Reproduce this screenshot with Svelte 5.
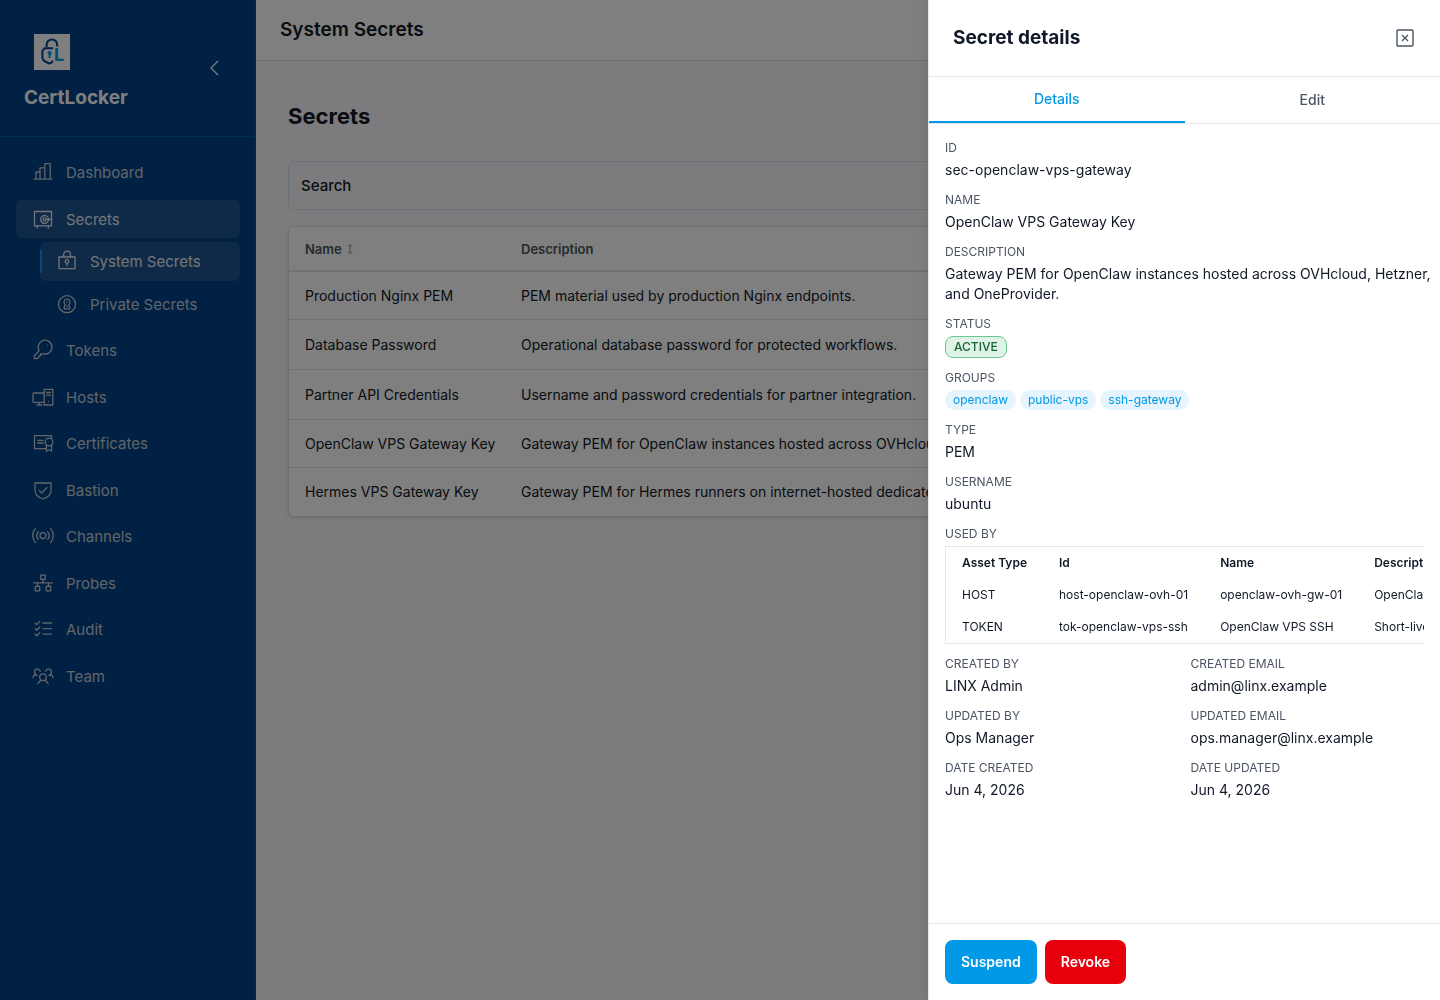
<script>
  const nav = [
    { label: 'Dashboard', icon: 'chart' },
    {
      label: 'Secrets',
      icon: 'safe',
      active: true,
      children: [
        { label: 'System Secrets', icon: 'lock', active: true },
        { label: 'Private Secrets', icon: 'keyhole' }
      ]
    },
    { label: 'Tokens', icon: 'key' },
    { label: 'Hosts', icon: 'hosts' },
    { label: 'Certificates', icon: 'certificate' },
    { label: 'Bastion', icon: 'shield' },
    { label: 'Channels', icon: 'broadcast' },
    { label: 'Probes', icon: 'network' },
    { label: 'Audit', icon: 'checklist' },
    { label: 'Team', icon: 'team' }
  ];

  const icons = {
    chart: 'M2 18.2H20M4 18V11H8M8 18V6.8H12.8M12.8 18V2.6H18.2V18',
    safe: 'M2.5 3.5H19.5V17.8H2.5ZM5.3 18V20M16.3 18V20M16.4 10.4A3.9 3.9 0 1 0 16.4 12.4M14.2 11.4A1.5 1.5 0 1 0 11.2 11.4A1.5 1.5 0 1 0 14.2 11.4M14 11.4H19.5',
    lock: 'M3 7H19V18.6H3ZM7.6 7V4.6A3.4 3.4 0 0 1 14.4 4.6V7M12.8 11.4A1.8 1.8 0 1 0 9.2 11.4A1.8 1.8 0 1 0 12.8 11.4M11 13.2V15.6',
    keyhole: 'M19.5 11.2A8.5 8.5 0 1 0 2.5 11.2A8.5 8.5 0 1 0 19.5 11.2M9.3 11.6A3 3 0 1 1 12.7 11.6L13.8 14.2V15.8H8.2V14.2ZM11 9.2V9.3M11 13V13.8',
    key: 'M7.2 11.6A6.9 6.9 0 1 1 11.2 14.7L9.6 15.2L8.6 15V16.6L6.8 17V18.4L5 19.6H2.4V16.8ZM15.6 6.3V6.4',
    hosts: 'M12 7H2Q1 7 1 8V15.4Q1 16.4 2 16.4H12M7.3 16.4V19M5 19H10M12.2 3.4H20.8V19H12.2ZM14.6 6.5H18.4M14.6 9.2H18.4M16.5 15.4V15.6',
    certificate: 'M19.5 6V3.6H2.5V16.6H13.6M5.8 8.4H11.2M5.8 11H11.2M20.8 10A3.8 3.8 0 1 0 13.2 10A3.8 3.8 0 1 0 20.8 10M14.4 13V19.2L17 17.8L19.6 19.2V13',
    shield: 'M3 4H19V11.5C19 15.6 15.4 18.6 11 20C6.6 18.6 3 15.6 3 11.5ZM7.2 11.4L9.8 14L14.8 8.8',
    broadcast: 'M14 10.6A3 3 0 1 0 8 10.6A3 3 0 1 0 14 10.6M6.3 6.8A6 6 0 0 0 6.3 14.4M15.7 6.8A6 6 0 0 1 15.7 14.4M3.4 3.6A10.5 10.5 0 0 0 3.4 17.6M18.6 3.6A10.5 10.5 0 0 1 18.6 17.6',
    network: 'M8.8 3.2H13.2V7.4H8.8ZM11 7.4V10.8M1.6 10.8H20.4M5.5 10.8V14.4M16.5 10.8V14.4M3.3 14.4H7.7V18.8H3.3ZM14.3 14.4H18.7V18.8H14.3Z',
    checklist: 'M11 5H19.4M11 10.6H19.4M11 16.2H19.4M3.2 5L4.8 6.6L7.8 3.4M3.2 10.6L4.8 12.2L7.8 9M3.2 16.2L4.8 17.8L7.8 14.6',
    team: 'M14.4 12.2A3.4 3.4 0 1 0 7.6 12.2A3.4 3.4 0 1 0 14.4 12.2M5.8 18.8Q7.4 16 9.2 15.2M16.2 18.8Q14.6 16 12.8 15.2M8.2 6.4A2.9 2.9 0 1 0 3.6 9.2M3.8 9Q1.4 9.8 1 12.6M3.2 10.4H5M13.8 6.4A2.9 2.9 0 1 1 18.4 9.2M18.2 9Q20.6 9.8 21 12.6M18.8 10.4H17'
  };

  const secrets = [
    { name: 'Production Nginx PEM', description: 'PEM material used by production Nginx endpoints.' },
    { name: 'Database Password', description: 'Operational database password for protected workflows.', tall: true },
    { name: 'Partner API Credentials', description: 'Username and password credentials for partner integration.', tall: true },
    { name: 'OpenClaw VPS Gateway Key', description: 'Gateway PEM for OpenClaw instances hosted across OVHcloud, Hetzner, and OneProvider.' },
    { name: 'Hermes VPS Gateway Key', description: 'Gateway PEM for Hermes runners on internet-hosted dedicated servers.' }
  ];

  const groups = ['openclaw', 'public-vps', 'ssh-gateway'];

  const usedBy = [
    ['HOST', 'host-openclaw-ovh-01', 'openclaw-ovh-gw-01', 'OpenClaw gateway'],
    ['TOKEN', 'tok-openclaw-vps-ssh', 'OpenClaw VPS SSH', 'Short-lived access']
  ];

  const audit = [
    ['Created by', 'LINX Admin'],
    ['Created email', 'admin@linx.example'],
    ['Updated by', 'Ops Manager'],
    ['Updated email', 'ops.manager@linx.example'],
    ['Date created', 'Jun 4, 2026'],
    ['Date updated', 'Jun 4, 2026']
  ];
</script>

{#snippet icon(name)}
  <svg class="icon" viewBox="0 0 22 22" aria-hidden="true"><path d={icons[name]} /></svg>
{/snippet}

<div class="app">
  <aside class="sidebar">
    <div class="brand">
      <div>
        <div class="logo">
          <svg viewBox="0 0 36 36" aria-hidden="true">
            <rect width="36" height="36" fill="#fff" />
            <g fill="none" stroke="#00428a" stroke-width="2">
              <path d="M12.6 13V10.8A5.3 5.3 0 0 1 23.2 10.8V12.6" />
              <path d="M19 14.2H10.6L8.4 16.6V23.6Q8.4 26 10.4 27L15 29.4Q18 29.4 18.6 26.6" />
            </g>
            <circle cx="15.6" cy="19" r="2.1" fill="#0099e8" />
            <path d="M15.6 20V24" stroke="#0099e8" stroke-width="2" />
            <text x="20" y="27" class="logo-letter">L</text>
          </svg>
        </div>
        <div class="brand-name">CertLocker</div>
      </div>
      <button class="collapse" aria-label="Collapse sidebar">
        <svg viewBox="0 0 16 16" aria-hidden="true"><path d="M12 1L5 8L12 15" /></svg>
      </button>
    </div>
    <nav>
      {#each nav as item}
        <div class="nav-group">
          <a href="#{item.icon}" class="nav-item" class:active={item.active}>{@render icon(item.icon)}<span>{item.label}</span></a>
          {#if item.children}
            {#each item.children as child}
              <a href="#{child.icon}" class="nav-item sub" class:active={child.active}>{@render icon(child.icon)}<span>{child.label}</span></a>
            {/each}
          {/if}
        </div>
      {/each}
    </nav>
  </aside>

  <div class="page">
    <header class="topbar">System Secrets</header>
    <main>
      <h1>Secrets</h1>
      <button class="search">Search</button>
      <div class="table-card">
        <table>
          <thead>
            <tr>
              <th class="name-col">
                <span class="sort">Name
                  <svg viewBox="0 0 8 12" aria-hidden="true"><path d="M4 1.5V10.5M2 3.5L4 1.5L6 3.5M2 8.5L4 10.5L6 8.5" /></svg>
                </span>
              </th>
              <th>Description</th>
            </tr>
          </thead>
          <tbody>
            {#each secrets as secret}
              <tr class:tall={secret.tall}><td>{secret.name}</td><td>{secret.description}</td></tr>
            {/each}
          </tbody>
        </table>
      </div>
    </main>
  </div>
</div>

<div class="overlay"></div>

<div class="drawer" role="dialog" aria-labelledby="drawer-title">
  <div class="drawer-head">
    <h2 id="drawer-title">Secret details</h2>
    <button class="close" aria-label="Close">
      <svg viewBox="0 0 22 22" aria-hidden="true">
        <rect x="3" y="3" width="16" height="16" rx="1" />
        <path d="M8 8L14 14M14 8L8 14" />
      </svg>
    </button>
  </div>
  <div class="tabs" role="tablist">
    <button role="tab" aria-selected="true" class="tab selected">Details</button>
    <button role="tab" aria-selected="false" class="tab">Edit</button>
  </div>
  <div class="drawer-body">
    <div class="field"><span class="label">ID</span><span>sec-openclaw-vps-gateway</span></div>
    <div class="field"><span class="label">Name</span><span>OpenClaw VPS Gateway Key</span></div>
    <div class="field wide">
      <span class="label">Description</span>
      <span>Gateway PEM for OpenClaw instances hosted across OVHcloud, Hetzner, and OneProvider.</span>
    </div>
    <div class="field"><span class="label">Status</span><span class="status">ACTIVE</span></div>
    <div class="field">
      <span class="label">Groups</span>
      <div class="chips">
        {#each groups as group}<span class="chip">{group}</span>{/each}
      </div>
    </div>
    <div class="field"><span class="label">Type</span><span>PEM</span></div>
    <div class="field"><span class="label">Username</span><span>ubuntu</span></div>
    <div class="field">
      <span class="label">Used by</span>
      <div class="used-scroll">
        <table class="used">
          <thead>
            <tr><th>Asset Type</th><th>Id</th><th>Name</th><th>Description</th></tr>
          </thead>
          <tbody>
            {#each usedBy as row}
              <tr>{#each row as cell}<td>{cell}</td>{/each}</tr>
            {/each}
          </tbody>
        </table>
      </div>
    </div>
    <div class="pairs">
      {#each audit as [label, value]}
        <div class="field"><span class="label">{label}</span><span>{value}</span></div>
      {/each}
    </div>
  </div>
  <div class="drawer-foot">
    <button class="action suspend">Suspend</button>
    <button class="action revoke">Revoke</button>
  </div>
</div>

<style>
  :global(body) {
    font-family: Inter, "Liberation Sans", sans-serif;
    font-size: 14px;
    line-height: 20px;
    color: #111827;
  }
  :global(*) { box-sizing: border-box; }
  button { font: inherit; color: inherit; background: none; border: 0; padding: 0; cursor: pointer; }
  svg { display: block; }
  table { border-collapse: separate; border-spacing: 0; }
  th { text-align: left; }

  .app { display: flex; min-height: 100vh; background: #f8f9fd; }
  .sidebar {
    flex: 0 0 256px;
    background: #004288;
    box-shadow: inset -1px 0 #0a5086;
    color: #fff;
  }
  .brand {
    display: flex;
    align-items: center;
    justify-content: space-between;
    padding: 24px;
    border-bottom: 1px solid #006098;
  }
  .logo { width: 56px; padding: 10px; margin-bottom: 4px; }
  .logo-letter { font-size: 18px; font-weight: 700; fill: #0099e8; }
  .brand-name { font-size: 19px; line-height: 28px; font-weight: 700; }
  .collapse { display: grid; place-items: center; width: 36px; height: 36px; }
  .collapse svg { width: 16px; height: 16px; fill: none; stroke: #fff; stroke-width: 1.2; }

  nav { display: flex; flex-direction: column; gap: 8px; padding: 16px; }
  .nav-group { display: flex; flex-direction: column; gap: 4px; }
  .nav-item {
    position: relative;
    display: flex;
    align-items: center;
    gap: 12px;
    padding: 8px 16px;
    border-radius: 6px;
    font-size: 15px;
    line-height: 1.5;
    color: #c4cad2;
    text-decoration: none;
  }
  .nav-item span { margin: 1px 0 -1px; }
  .nav-item.active { color: #e8ebef; background: #1f5490; }
  .sub { margin-left: 24px; }
  .sub.active::before {
    content: "";
    position: absolute;
    left: 0;
    top: 8px;
    bottom: 8px;
    width: 2px;
    background: #0099e8;
  }
  .icon {
    width: 22px;
    height: 22px;
    fill: none;
    stroke: currentColor;
    stroke-width: 1.3;
    stroke-linecap: round;
    stroke-linejoin: round;
  }

  .page { flex: 1; min-width: 0; }
  .topbar {
    padding: 16px 24px;
    background: #fcfffc;
    border-bottom: 1px solid #dfe1e6;
    font-size: 19px;
    line-height: 28px;
    font-weight: 600;
  }
  main { padding: 32px; }
  h1 { margin: 4px 0 26px; font-size: 22px; line-height: 38px; font-weight: 700; }
  .search {
    display: block;
    width: 100%;
    padding: 12px;
    border: 1px solid #dfe1e6;
    border-radius: 6px;
    font-size: 15px;
    line-height: 23px;
    font-weight: 500;
    text-align: left;
  }
  .table-card {
    margin-top: 16px;
    overflow: hidden;
    border: 1px solid #dfe1e6;
    border-radius: 6px;
    background: #fff;
    box-shadow: 0 1px 4px rgba(0, 0, 0, 0.15);
  }
  .table-card table { width: 100%; table-layout: fixed; }
  .table-card th {
    height: 45px;
    padding: 0 16px;
    background: #fcfffc;
    border-bottom: 2px solid #e3e5ea;
    font-size: 13px;
    font-weight: 600;
    color: #4b5563;
  }
  .table-card td { height: 48px; padding: 0 16px; border-bottom: 1px solid #dfe1e6; white-space: nowrap; }
  .table-card .tall td { height: 50px; }
  .table-card tr:last-child td { border-bottom: 0; }
  .table-card .name-col { width: 216px; }
  .sort { display: flex; align-items: center; gap: 4px; }
  .sort svg { width: 8px; height: 12px; fill: none; stroke: #8a92a0; stroke-width: 1; }

  .overlay { position: fixed; inset: 0; background: rgba(0, 0, 0, 0.5); }

  .drawer {
    position: fixed;
    top: 0;
    right: 0;
    bottom: 0;
    width: 512px;
    max-width: 100%;
    display: flex;
    flex-direction: column;
    background: #fff;
    border-left: 1px solid #e5e7eb;
    box-shadow: 0 0 16px rgba(0, 0, 0, 0.1);
  }
  .drawer-head {
    display: flex;
    align-items: center;
    justify-content: space-between;
    padding: 24px;
    border-bottom: 1px solid #e5e7eb;
  }
  h2 { margin: 0; font-size: 19px; line-height: 28px; font-weight: 700; }
  .close svg { width: 22px; height: 22px; fill: none; stroke: #4b5563; stroke-width: 1.4; }
  .tabs { display: grid; grid-template-columns: 1fr 1fr; border-bottom: 1px solid #e5e7eb; }
  .tab { height: 46px; font-weight: 500; color: #4b5563; }
  .tab.selected { color: #0099e8; border-bottom: 2px solid #0099e8; }

  .drawer-body {
    flex: 1;
    min-height: 0;
    overflow-y: auto;
    display: flex;
    flex-direction: column;
    gap: 12px;
    padding: 16px;
  }
  .field { display: flex; flex-direction: column; align-items: flex-start; gap: 4px; min-width: 0; }
  .wide { margin-right: -16px; }
  .label { font-size: 12px; line-height: 16px; color: #4b5563; text-transform: uppercase; }
  .status {
    padding: 2px 8px;
    border: 1px solid #6cc890;
    border-radius: 8px;
    background: #def3e6;
    color: #166534;
    font-size: 12px;
    line-height: 16px;
    font-weight: 500;
  }
  .chips { display: flex; flex-wrap: wrap; gap: 4px; }
  .chip {
    padding: 2px 8px;
    border-radius: 10px;
    background: #e5f4fd;
    color: #0099e8;
    font-size: 12px;
    line-height: 16px;
  }
  .used-scroll { width: 100%; overflow-x: auto; scrollbar-width: none; }
  .used { border: 1px solid #e5e7eb; font-size: 12px; line-height: 16px; white-space: nowrap; }
  .used th, .used td { padding: 8px 16px; }
  .used th { font-weight: 600; }
  .pairs { display: grid; grid-template-columns: 1fr 1fr; gap: 12px; }

  .drawer-foot { display: flex; gap: 8px; padding: 16px; border-top: 1px solid #e5e7eb; }
  .action { padding: 12px 16px; border-radius: 8px; color: #fff; font-weight: 600; }
  .suspend { background: #0099e8; }
  .revoke { background: #e7000b; }
</style>
